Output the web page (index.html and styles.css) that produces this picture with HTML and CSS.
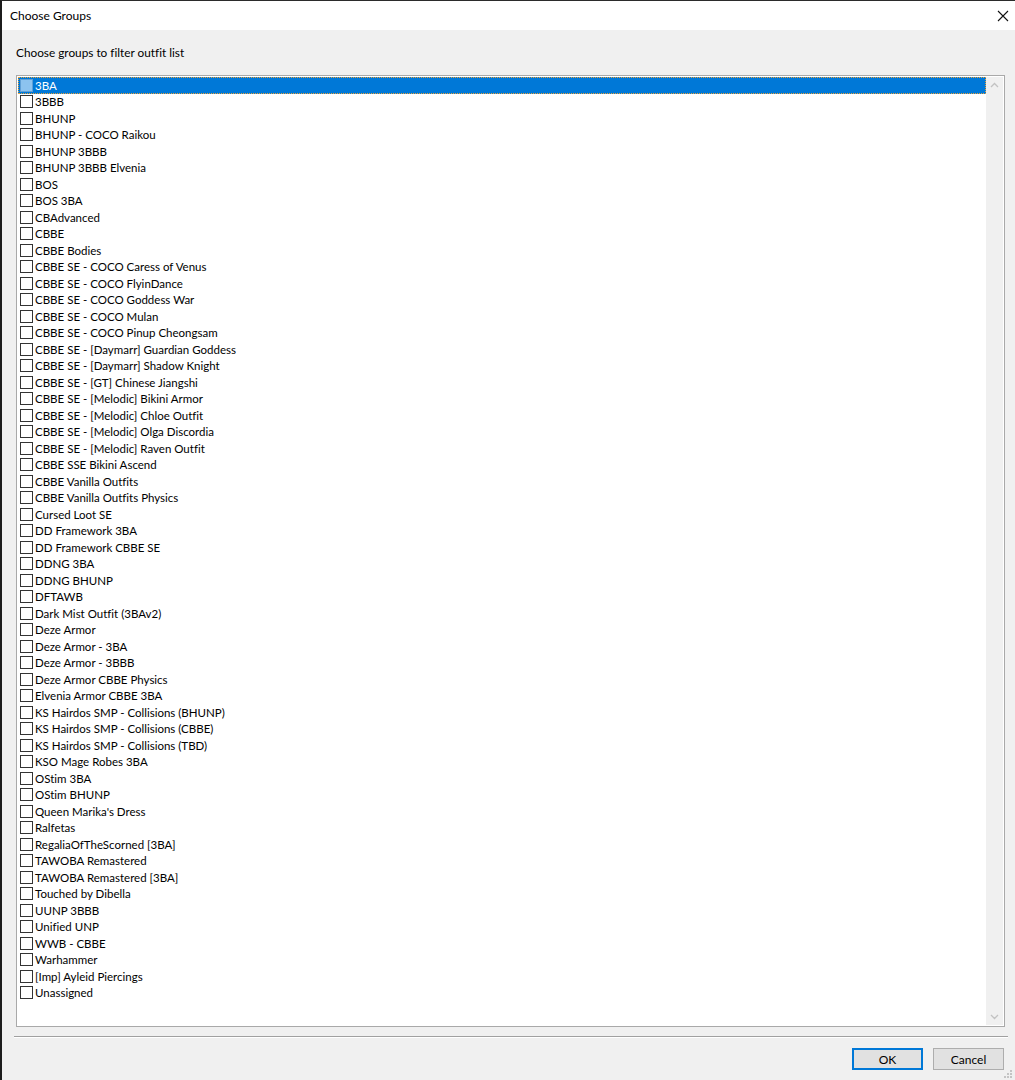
FILE: index.html
```html
<!DOCTYPE html>
<html lang="en">
<head>
    <meta charset="UTF-8">
    <title>Choose Groups</title>
    <link rel="stylesheet" href="styles.css">
</head>
<body>
    <div class="window">
        <div class="titlebar">
            <span class="title">Choose Groups</span>
            <svg class="close" width="12" height="12" viewBox="0 0 12 12">
                <path d="M1 1 L11 11 M11 1 L1 11" stroke="#111" stroke-width="1.1" fill="none"/>
            </svg>
        </div>

        <div class="content">
            <p class="hint">Choose groups to filter outfit list</p>

            <div class="listbox">
                <div class="items">
                    <div class="item selected"><span class="check"></span>3BA</div>
                    <div class="item"><span class="check"></span>3BBB</div>
                    <div class="item"><span class="check"></span>BHUNP</div>
                    <div class="item"><span class="check"></span>BHUNP - COCO Raikou</div>
                    <div class="item"><span class="check"></span>BHUNP 3BBB</div>
                    <div class="item"><span class="check"></span>BHUNP 3BBB Elvenia</div>
                    <div class="item"><span class="check"></span>BOS</div>
                    <div class="item"><span class="check"></span>BOS 3BA</div>
                    <div class="item"><span class="check"></span>CBAdvanced</div>
                    <div class="item"><span class="check"></span>CBBE</div>
                    <div class="item"><span class="check"></span>CBBE Bodies</div>
                    <div class="item"><span class="check"></span>CBBE SE - COCO Caress of Venus</div>
                    <div class="item"><span class="check"></span>CBBE SE - COCO FlyinDance</div>
                    <div class="item"><span class="check"></span>CBBE SE - COCO Goddess War</div>
                    <div class="item"><span class="check"></span>CBBE SE - COCO Mulan</div>
                    <div class="item"><span class="check"></span>CBBE SE - COCO Pinup Cheongsam</div>
                    <div class="item"><span class="check"></span>CBBE SE - [Daymarr] Guardian Goddess</div>
                    <div class="item"><span class="check"></span>CBBE SE - [Daymarr] Shadow Knight</div>
                    <div class="item"><span class="check"></span>CBBE SE - [GT] Chinese Jiangshi</div>
                    <div class="item"><span class="check"></span>CBBE SE - [Melodic] Bikini Armor</div>
                    <div class="item"><span class="check"></span>CBBE SE - [Melodic] Chloe Outfit</div>
                    <div class="item"><span class="check"></span>CBBE SE - [Melodic] Olga Discordia</div>
                    <div class="item"><span class="check"></span>CBBE SE - [Melodic] Raven Outfit</div>
                    <div class="item"><span class="check"></span>CBBE SSE Bikini Ascend</div>
                    <div class="item"><span class="check"></span>CBBE Vanilla Outfits</div>
                    <div class="item"><span class="check"></span>CBBE Vanilla Outfits Physics</div>
                    <div class="item"><span class="check"></span>Cursed Loot SE</div>
                    <div class="item"><span class="check"></span>DD Framework 3BA</div>
                    <div class="item"><span class="check"></span>DD Framework CBBE SE</div>
                    <div class="item"><span class="check"></span>DDNG 3BA</div>
                    <div class="item"><span class="check"></span>DDNG BHUNP</div>
                    <div class="item"><span class="check"></span>DFTAWB</div>
                    <div class="item"><span class="check"></span>Dark Mist Outfit (3BAv2)</div>
                    <div class="item"><span class="check"></span>Deze Armor</div>
                    <div class="item"><span class="check"></span>Deze Armor - 3BA</div>
                    <div class="item"><span class="check"></span>Deze Armor - 3BBB</div>
                    <div class="item"><span class="check"></span>Deze Armor CBBE Physics</div>
                    <div class="item"><span class="check"></span>Elvenia Armor CBBE 3BA</div>
                    <div class="item"><span class="check"></span>KS Hairdos SMP - Collisions (BHUNP)</div>
                    <div class="item"><span class="check"></span>KS Hairdos SMP - Collisions (CBBE)</div>
                    <div class="item"><span class="check"></span>KS Hairdos SMP - Collisions (TBD)</div>
                    <div class="item"><span class="check"></span>KSO Mage Robes 3BA</div>
                    <div class="item"><span class="check"></span>OStim 3BA</div>
                    <div class="item"><span class="check"></span>OStim BHUNP</div>
                    <div class="item"><span class="check"></span>Queen Marika's Dress</div>
                    <div class="item"><span class="check"></span>Ralfetas</div>
                    <div class="item"><span class="check"></span>RegaliaOfTheScorned [3BA]</div>
                    <div class="item"><span class="check"></span>TAWOBA Remastered</div>
                    <div class="item"><span class="check"></span>TAWOBA Remastered [3BA]</div>
                    <div class="item"><span class="check"></span>Touched by Dibella</div>
                    <div class="item"><span class="check"></span>UUNP 3BBB</div>
                    <div class="item"><span class="check"></span>Unified UNP</div>
                    <div class="item"><span class="check"></span>WWB - CBBE</div>
                    <div class="item"><span class="check"></span>Warhammer</div>
                    <div class="item"><span class="check"></span>[Imp] Ayleid Piercings</div>
                    <div class="item"><span class="check"></span>Unassigned</div>
                </div>

                <div class="scrollbar">
                    <svg class="arrow" width="17" height="17" viewBox="0 0 17 17">
                        <path d="M5 10 L8.5 6.5 L12 10" stroke="#c2c2c2" stroke-width="1.3" fill="none"/>
                    </svg>
                    <svg class="arrow" width="17" height="17" viewBox="0 0 17 17">
                        <path d="M5 7 L8.5 10.5 L12 7" stroke="#c2c2c2" stroke-width="1.3" fill="none"/>
                    </svg>
                </div>
            </div>

            <div class="separator"></div>

            <div class="buttons">
                <button class="default">OK</button>
                <button>Cancel</button>
            </div>

            <svg class="grip" width="10" height="10" viewBox="0 0 10 10">
                <rect x="7" y="1" width="2" height="2" fill="#c4c4c4"/>
                <rect x="4" y="4" width="2" height="2" fill="#c4c4c4"/>
                <rect x="7" y="4" width="2" height="2" fill="#c4c4c4"/>
                <rect x="1" y="7" width="2" height="2" fill="#c4c4c4"/>
                <rect x="4" y="7" width="2" height="2" fill="#c4c4c4"/>
                <rect x="7" y="7" width="2" height="2" fill="#c4c4c4"/>
            </svg>
        </div>
    </div>
</body>
</html>
```

FILE: styles.css
```css
*{
    margin: 0;
    padding: 0;
    box-sizing: border-box;
}
body{
    font-family: Lato, "Noto Sans", sans-serif;
    font-size: 12px;
    font-variant-ligatures: none;
    color: #000;
    background: #f0f0f0;
}
.window{
    height: 1080px;
    border-left: 2px solid #1c1c1c;
    border-top: 1px solid #2b2b2b;
    display: flex;
    flex-direction: column;
}
.titlebar{
    height: 29px;
    background: #fff;
    display: flex;
    align-items: center;
    justify-content: space-between;
    padding: 0 6px 0 8px;
}
.title{
    line-height: 16px;
}
.content{
    flex: 1;
    position: relative;
    padding: 15px 10px 0 14px;
    display: flex;
    flex-direction: column;
}
.hint{
    line-height: 16px;
    font-size: 11.8px;
    margin-bottom: 14px;
}
.listbox{
    height: 952px;
    border: 1px solid #a9a9a9;
    background: #fff;
    display: flex;
    padding: 1px;
}
.items{
    flex: 1;
}
.item{
    height: 16.5px;
    display: flex;
    align-items: center;
    padding-left: 2px;
    font-size: 11.5px;
    white-space: nowrap;
}
.check{
    width: 13px;
    height: 13px;
    border: 1px solid #333;
    background: #fff;
    margin-right: 2px;
    flex-shrink: 0;
}
.item.selected{
    background: #0078d7;
    color: #fff;
    outline: 1px dotted #e9a23b;
    outline-offset: -1px;
}
.item.selected .check{
    background: #8cc3ef;
    border-color: #5e9fd6;
}
.scrollbar{
    width: 17px;
    background: #f0f0f0;
    display: flex;
    flex-direction: column;
    justify-content: space-between;
}
.arrow{
    display: block;
}
.separator{
    margin: 9px -3px 0 -2px;
    height: 2px;
    background: #a0a0a0;
    border-bottom: 1px solid #fff;
}
.buttons{
    display: flex;
    justify-content: flex-end;
    gap: 10px;
    margin-top: 10px;
    padding-right: 1px;
}
button{
    width: 71px;
    height: 22px;
    font-family: inherit;
    font-size: 12px;
    color: #000;
    background: #e1e1e1;
    border: 1px solid #adadad;
}
button.default{
    border: 2px solid #0078d7;
}
.grip{
    position: absolute;
    right: 2px;
    bottom: 1px;
}
```
